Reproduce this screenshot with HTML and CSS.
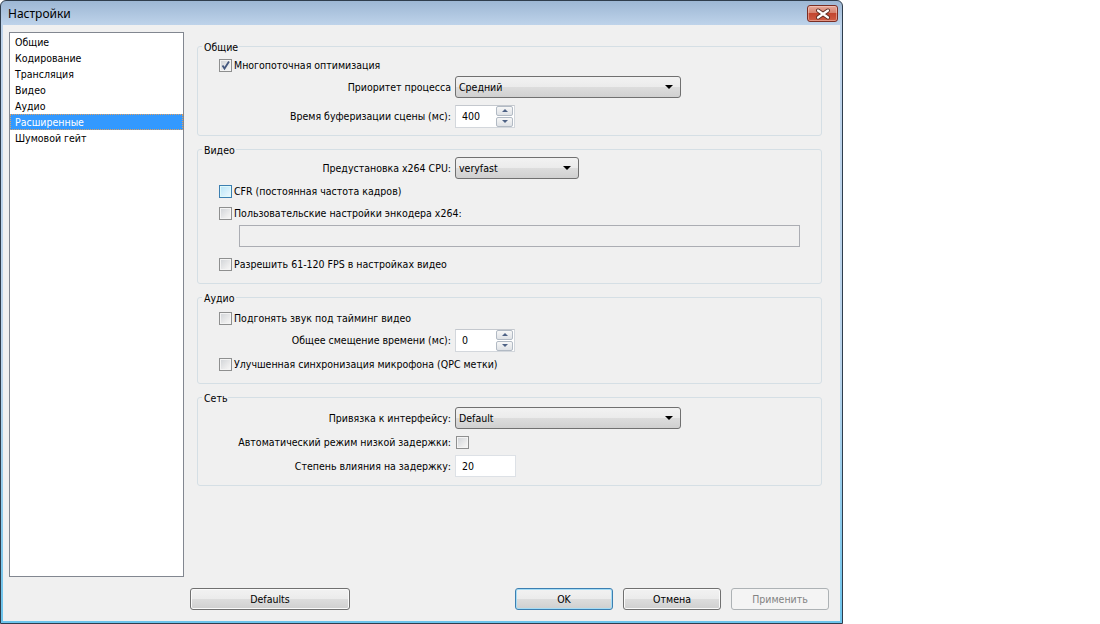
FILE: index.html
```html
<!DOCTYPE html>
<html lang="ru">
<head>
    <meta charset="UTF-8">
    <title>Настройки</title>
    <link rel="stylesheet" href="styles.css">
</head>
<body>

    <div class="window">
        <div class="titlebar">
            <span class="title">Настройки</span>
            <button class="close">
                <svg width="28" height="14" viewBox="0 0 28 14">
                    <path d="M9 3.5 L19 10.5 M19 3.5 L9 10.5" stroke="#5a2a22" stroke-width="4" stroke-linecap="round"/>
                    <path d="M9 3.5 L19 10.5 M19 3.5 L9 10.5" stroke="#fff" stroke-width="2.2" stroke-linecap="round"/>
                </svg>
            </button>
        </div>

        <div class="client">
            <div class="main">
                <ul class="pages">
                    <li>Общие</li>
                    <li>Кодирование</li>
                    <li>Трансляция</li>
                    <li>Видео</li>
                    <li>Аудио</li>
                    <li class="selected">Расширенные</li>
                    <li>Шумовой гейт</li>
                </ul>

                <div class="panel">
                    <div class="group">
                        <div class="group-title">Общие</div>
                        <label class="check">
                            <span class="box checked">
                                <svg width="11" height="11" viewBox="0 0 11 11"><path d="M2.5 5.5 L4.5 8.5 L9 1.5" fill="none" stroke="#44587f" stroke-width="1.8"/></svg>
                            </span>
                            Многопоточная оптимизация
                        </label>
                        <div class="field">
                            <span class="label">Приоритет процесса</span>
                            <div class="combo wide">Средний<span class="arrow"></span></div>
                        </div>
                        <div class="field sp7">
                            <span class="label">Время буферизации сцены (мс):</span>
                            <div class="spin">
                                <span>400</span>
                                <span class="arrows"><span class="up"></span><span class="down"></span></span>
                            </div>
                        </div>
                    </div>

                    <div class="group">
                        <div class="group-title">Видео</div>
                        <div class="field">
                            <span class="label">Предустановка x264 CPU:</span>
                            <div class="combo short">veryfast<span class="arrow"></span></div>
                        </div>
                        <label class="check low"><span class="box hover"></span>CFR (постоянная частота кадров)</label>
                        <label class="check low"><span class="box"></span>Пользовательские настройки энкодера x264:</label>
                        <div class="text-input disabled sp2"></div>
                        <label class="check sp6"><span class="box"></span>Разрешить 61-120 FPS в настройках видео</label>
                    </div>

                    <div class="group">
                        <div class="group-title">Аудио</div>
                        <label class="check sp2"><span class="box"></span>Подгонять звук под тайминг видео</label>
                        <div class="field">
                            <span class="label">Общее смещение времени (мс):</span>
                            <div class="spin">
                                <span>0</span>
                                <span class="arrows"><span class="up"></span><span class="down"></span></span>
                            </div>
                        </div>
                        <label class="check sp2"><span class="box"></span>Улучшенная синхронизация микрофона (QPC метки)</label>
                    </div>

                    <div class="group">
                        <div class="group-title">Сеть</div>
                        <div class="field sp2">
                            <span class="label">Привязка к интерфейсу:</span>
                            <div class="combo wide">Default<span class="arrow"></span></div>
                        </div>
                        <div class="field sp2">
                            <span class="label">Автоматический режим низкой задержки:</span>
                            <span class="box shifted"></span>
                        </div>
                        <div class="field sp2">
                            <span class="label">Степень влияния на задержку:</span>
                            <div class="number">20</div>
                        </div>
                    </div>
                </div>
            </div>

            <div class="footer">
                <button class="btn defaults">Defaults</button>
                <div class="actions">
                    <button class="btn default">OK</button>
                    <button class="btn">Отмена</button>
                    <button class="btn" disabled>Применить</button>
                </div>
            </div>
        </div>
    </div>

</body>
</html>
```

FILE: styles.css
```css
* {
    box-sizing: border-box;
}

body {
    margin: 0;
    background-color: #fff;
    font-family: "DejaVu Sans", "Liberation Sans", sans-serif;
    font-stretch: condensed;
    font-size: 10.5px;
    color: #000;
}

.window {
    width: 843px;
    height: 624px;
    border: 1px solid #2f3d4c;
    border-radius: 6px 6px 0 0;
    background: linear-gradient(to bottom, #9db7d4 0, #bed3ea 24px, #b9d3ea 60%, #6cc4ec 100%);
    display: flex;
    flex-direction: column;
}

.titlebar {
    height: 24px;
    display: flex;
    align-items: center;
    justify-content: space-between;
    padding: 0 4px 0 7px;
}

.title {
    font-family: "Noto Sans", "Liberation Sans", sans-serif;
    font-stretch: normal;
    font-size: 12px;
}

.close {
    width: 31px;
    height: 17px;
    margin-top: 1px;
    padding: 0;
    border: 1px solid #7a2d23;
    border-radius: 3px;
    background: linear-gradient(to bottom, #e6a898 0, #d6826f 45%, #c3452f 50%, #cf5d45 100%);
    box-shadow: inset 0 0 0 1px rgba(255, 220, 210, .45);
    display: flex;
    align-items: center;
    justify-content: center;
}

.client {
    flex: 1;
    margin: 0 2px 2px 2px;
    background-color: #f0f0f0;
    padding: 7px 11px 0 6px;
}

.main {
    display: flex;
    height: 545px;
}

.pages {
    width: 175px;
    height: 545px;
    margin: 0;
    padding: 1px 0 0;
    list-style: none;
    background-color: #fff;
    border: 1px solid #828790;
}

.pages li {
    height: 16px;
    line-height: 17px;
    padding-left: 5px;
}

.pages li.selected {
    background-color: #3399ff;
    color: #fff;
    outline: 1px dotted #e0a060;
    outline-offset: -1px;
}

.panel {
    width: 625px;
    margin-left: 13px;
    padding-top: 14px;
    display: flex;
    flex-direction: column;
    gap: 13px;
}

.group {
    border: 1px solid #d5dfe5;
    border-radius: 3px;
    padding: 0 8px 8px 21px;
    display: flex;
    flex-direction: column;
}

.group-title {
    width: fit-content;
    margin: -7px 0 0 -17px;
    padding: 0 1px 0 2px;
    line-height: 15px;
    height: 14px;
    background-color: #f0f0f0;
}

.check {
    height: 22px;
    display: flex;
    align-items: center;
    gap: 2px;
}

.check.low {
    padding-top: 2px;
}

.field {
    height: 22px;
    display: flex;
    align-items: center;
}

.sp2 { margin-top: 2px; }
.sp6 { margin-top: 6px; }
.sp7 { margin-top: 7px; }

.label {
    width: 232px;
    margin-right: 4px;
    text-align: right;
    white-space: nowrap;
}

.box {
    width: 13px;
    height: 13px;
    flex: none;
    border: 1px solid #8e8f8f;
    background: linear-gradient(135deg, #cfd2d6 0, #eeeeee 70%, #f8f8f8 100%);
    box-shadow: inset 0 0 0 1px #f4f4f4;
    display: flex;
    align-items: center;
    justify-content: center;
}

.box.hover {
    border-color: #3c7fb1;
    background: linear-gradient(135deg, #b6e3f7 0, #def3fc 70%, #eef9fe 100%);
    box-shadow: inset 0 0 0 1px #def9fa;
}

.box.shifted {
    margin-left: 1px;
}

.combo {
    height: 22px;
    padding: 0 7px 0 3px;
    border: 1px solid #707070;
    border-radius: 3px;
    background: linear-gradient(to bottom, #f2f2f2 0, #ebebeb 50%, #dddddd 50%, #d0d0d0 100%);
    display: flex;
    align-items: center;
    justify-content: space-between;
}

.combo.wide { width: 226px; }
.combo.short { width: 124px; }

.arrow {
    width: 0;
    height: 0;
    border-left: 4px solid transparent;
    border-right: 4px solid transparent;
    border-top: 4px solid #000;
}

.spin {
    width: 60px;
    height: 23px;
    padding: 0 1px 0 6px;
    border: 1px solid #d3d7dc;
    border-top-color: #c4c8ce;
    background-color: #fff;
    display: flex;
    align-items: center;
    justify-content: space-between;
}

.arrows {
    display: flex;
    flex-direction: column;
    gap: 1px;
}

.arrows span {
    width: 17px;
    height: 10px;
    border: 1px solid #b2bac4;
    border-radius: 2px;
    background: linear-gradient(to bottom, #f7f7f7, #dfe2e6);
    display: flex;
    align-items: center;
    justify-content: center;
}

.arrows .up::after,
.arrows .down::after {
    content: "";
    border-left: 3px solid transparent;
    border-right: 3px solid transparent;
}

.arrows .up::after { border-bottom: 3px solid #4e6285; }
.arrows .down::after { border-top: 3px solid #4e6285; }

.text-input {
    width: 561px;
    height: 22px;
    margin-left: 20px;
    border: 1px solid #abadb3;
    background-color: #f0f0f0;
}

.number {
    width: 61px;
    height: 22px;
    line-height: 20px;
    padding-left: 6px;
    border: 1px solid #dde1e6;
    background-color: #fff;
}

.footer {
    margin-top: 11px;
    display: flex;
    justify-content: space-between;
}

.btn {
    width: 98px;
    height: 22px;
    padding: 0;
    font: inherit;
    color: #000;
    border: 1px solid #707070;
    border-radius: 3px;
    background: linear-gradient(to bottom, #f2f2f2 0, #ebebeb 50%, #dddddd 50%, #cfcfcf 100%);
    box-shadow: inset 0 0 0 1px #fafafa;
}

.btn.defaults {
    width: 160px;
    margin-left: 181px;
}

.btn.default {
    border-color: #3c7fb1;
    box-shadow: inset 0 0 0 1px #a6dcf5;
}

.btn:disabled {
    color: #838383;
    border-color: #adb2b5;
    background: #f4f4f4;
    box-shadow: none;
}

.actions {
    display: flex;
    gap: 10px;
}
```
